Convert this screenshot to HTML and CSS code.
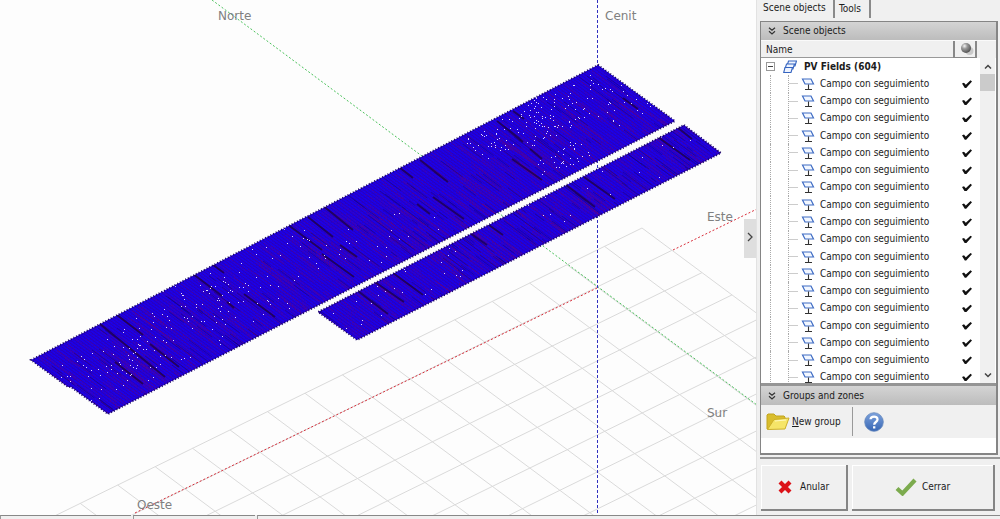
FILE: index.html
```html
<!DOCTYPE html>
<html lang="es">
<head>
<meta charset="utf-8">
<title>Scene objects</title>
<link rel="stylesheet" href="styles.css">
</head>
<body>
<svg class="defs" aria-hidden="true">
  <symbol id="panel-icon" viewBox="0 0 14 14">
    <path d="M1.5 2h8.5l2.5 5H4z" fill="#f2f7ff" stroke="#3f6cc4" stroke-width="1.2"/>
    <path d="M7.5 7.5V12M4 12.5h7" fill="none" stroke="#333" stroke-width="1.1"/>
  </symbol>
  <symbol id="chevrons" viewBox="0 0 8 8">
    <path d="M1 .7l3 2.6L7 .7M1 4.3l3 2.6 3-2.6" fill="none" stroke="#333" stroke-width="1.2"/>
  </symbol>
</svg>
<div class="app">
  <main class="scene">
    <svg class="view" viewBox="0 0 756 515" preserveAspectRatio="xMidYMid slice" role="img" aria-label="PV field">
      <defs>
        <pattern id="cells" width="4" height="3" patternUnits="userSpaceOnUse" patternTransform="matrix(0.8 0.58 -0.87 0.45 0 0)">
          <rect width="4" height="3" fill="#1b00ea"/>
          <rect width="4" height="1" fill="#2c00b4"/>
          <rect width="1" height="2" fill="#2600c4"/>
        </pattern>
        <clipPath id="fields"><path d="M598 65L675 121 108 414 71 387 68 387 31 360zM684 125L721 153 357 340 318 312z"/></clipPath>
      </defs>
      <path id="grid" class="grid"/>
      <path class="axis north" d="M212 0L757 405"/>
      <path class="axis east" d="M135 513L597 288M673 250L757 209"/>
      <path class="axis zenith" d="M597.500 0V515"/>
      <path class="field" d="M598 65L675 121 108 414 71 387 68 387 31 360zM684 125L721 153 357 340 318 312z"/>
      <g clip-path="url(#fields)">
        <path id="rows-red" class="rows red"/>
        <path id="rows-dark" class="rows dark"/>
        <path class="trench" d="M420 160l28 22M400 168l13 10M433 197l31 22M417 204l13 10M497 121l26 21M513 111l11 8M530 149l12 10M512 159l30 21M623 98l15 11M677 127l15 12M658 137l32 23M584 177l31 22M566 185l29 22M489 225l14 10M470 233l17 12M393 273l30 22M375 282l29 20M358 291l30 23M322 205l31 25M287 224l35 26M322 254l32 23M308 217l25 20M340 245l17 12M193 274l29 22M227 302l7 6M244 294l31 23M117 315l26 20M100 324l65 53M150 344l29 23M115 362l28 22M212 264l12 9"/>
        <path id="gaps" class="gaps"/>
      </g>
      <path class="rim" d="M598 65L675 121 108 414 71 387 68 387 31 360zM684 125L721 153 357 340 318 312z"/>
      <g class="labels">
        <text x="218" y="20">Norte</text>
        <text x="605" y="20">Cenit</text>
        <text x="707" y="221">Este</text>
        <text x="707" y="417">Sur</text>
        <text x="137" y="509">Oeste</text>
      </g>
    </svg>
    <button class="collapse" aria-label="Collapse panel"><svg viewBox="0 0 6 10"><path d="M1 1l4 4-4 4" fill="none" stroke="#444" stroke-width="1.3"/></svg></button>
  </main>

  <aside class="side">
    <nav class="tabs">
      <button class="tab active">Scene objects</button>
      <button class="tab">Tools</button>
    </nav>
    <div class="box">
      <h2 class="bar"><svg><use href="#chevrons"/></svg>Scene objects</h2>
      <div class="columns">
        <span class="name">Name</span>
        <span class="ball"><svg viewBox="0 0 14 14"><defs><radialGradient id="ball" cx=".35" cy=".3" r=".7"><stop offset="0" stop-color="#f4f4f4"/><stop offset=".4" stop-color="#999"/><stop offset="1" stop-color="#555"/></radialGradient></defs><circle cx="9.500" cy="9" r="4" fill="#c9c9c9"/><circle cx="6" cy="6" r="5" fill="url(#ball)"/></svg></span>
      </div>
      <div class="tree">
        <div class="items">
          <ul class="list" id="list">
            <li class="root">
              <button class="fold" aria-label="Collapse"></button>
              <svg class="stack" viewBox="0 0 14 14"><g fill="#eef4ff" stroke="#3564c0" stroke-width="1.1"><path d="M5.500 1h8l-1.500 5h-8z"/><path d="M3.500 4h8L10 9H2z"/><path d="M2 7.500h7.500L8 12.500H.7z"/></g></svg>
              PV Fields (604)
            </li>
          </ul>
        </div>
        <div class="scroll">
          <button class="arrow" aria-label="Up"><svg viewBox="0 0 8 5"><path d="M1 4.500l3-3 3 3" /></svg></button>
          <div class="track"><div class="thumb"></div></div>
          <button class="arrow" aria-label="Down"><svg viewBox="0 0 8 5"><path d="M1 .5l3 3 3-3" /></svg></button>
        </div>
      </div>
      <h2 class="bar groups"><svg><use href="#chevrons"/></svg>Groups and zones</h2>
      <div class="tools">
        <button class="tool"><svg class="folder" viewBox="0 0 24 18"><path d="M1 16V2l1-1h6l2 2h8l1 1v4L5 16z" fill="#d9bd2c" stroke="#c2a51e"/><path d="M1.500 16.500L8 6.500 23 5l-4 11z" fill="#f6e568" stroke="#cdb02a"/><path d="M9 8l11-1" stroke="#fff9bd"/></svg><span><u>N</u>ew group</span></button>
        <button class="tool help" aria-label="Help"><svg viewBox="0 0 20 20"><defs><linearGradient id="help" x2="0" y2="1"><stop offset="0" stop-color="#7da2dc"/><stop offset="1" stop-color="#3766b4"/></linearGradient></defs><circle cx="10" cy="10" r="9.300" fill="url(#help)" stroke="#6689bd" stroke-width=".8"/><path d="M6.500 7.300C6.700 3.800 13.500 3.600 13.500 7.400c0 2.500-3.300 2.700-3.300 5.300M10.200 14.200v2.200" fill="none" stroke="#fff" stroke-width="2.300"/></svg></button>
      </div>
    </div>
    <div class="actions">
      <button class="action"><svg class="cross" viewBox="0 0 14 14"><path d="M2 2l10 10M12 2L2 12" stroke="#dc1218" stroke-width="4.200"/></svg>Anular</button>
      <button class="action"><svg class="tick" viewBox="0 0 22 18"><path d="M2 10.500l5.500 5L20 2" fill="none" stroke="#7cab4e" stroke-width="4.200"/></svg>Cerrar</button>
    </div>
  </aside>
  <footer class="status"><span></span><span></span><span></span></footer>
</div>
<script src="scene.js"></script>
</body>
</html>
```

FILE: styles.css
```css
* { box-sizing: border-box; }
body { margin: 0; font: 10px/14px "DejaVu Sans Condensed", "DejaVu Sans", sans-serif; color: #1c1c1c; background: #f0f0f0; }
button { font: inherit; color: inherit; border: 0; padding: 0; background: none; }
ul, h2 { margin: 0; padding: 0; list-style: none; font: inherit; }
.defs { position: absolute; width: 0; height: 0; }
.app { display: grid; grid-template: minmax(0, 1fr) 4px / minmax(0, 1fr) 244px; height: 100vh; overflow: hidden; }

.scene { position: relative; background: #fdfdfd; overflow: hidden; }
.view { display: block; width: 100%; height: 100%; }
.grid { fill: none; stroke: #dadada; }
.axis { fill: none; stroke-dasharray: 2 2; }
.north { stroke: #4cc25c; }
.east { stroke: #d82c38; }
.zenith { stroke: #3030c0; stroke-dasharray: 3 2; }
.field { fill: url(#cells); }
.rim { fill: none; stroke: #16005c; stroke-width: 2; stroke-dasharray: 1 2; }
.rows { fill: none; }
.red { stroke: #780070; stroke-opacity: .6; stroke-dasharray: 1 1; }
.dark { stroke: #16006c; stroke-opacity: .45; }
.trench { fill: none; stroke: #20003c; stroke-width: 2; stroke-opacity: .75; }
.gaps { fill: #dcd4ff; }
.labels { font: 12px "DejaVu Sans", sans-serif; fill: #808080; }
.collapse { position: absolute; right: 0; top: 219px; width: 12px; height: 39px; background: #dedede; }
.collapse svg { width: 6px; height: 10px; }

.side { display: flex; flex-direction: column; min-height: 0; border-left: 1px solid #e2e2e2; padding-left: 3px; }
.tabs { display: flex; align-items: flex-start; height: 21px; }
.tab { height: 18px; padding: 0 8px 0 4px; border-right: 2px solid #8a8a8a; }
.tab.active { width: 75px; padding: 0 0 2px 3px; text-align: left; white-space: nowrap; }
.box { flex: 1; min-height: 0; display: flex; flex-direction: column; margin-right: 2px; border: 2px solid #858585; border-width: 1px 2px 2px 1px; background: #fff; }
.bar { display: flex; align-items: center; gap: 7px; height: 18px; padding-left: 7px; background: linear-gradient(#d4d4d4, #bcbcbc); }
.bar svg { width: 8px; height: 8px; }
.columns { display: flex; height: 18px; padding-right: 19px; background: #f0f0f0; border-top: 1px solid #fafafa; }
.name { flex: 1; padding: 2px 5px; border-bottom: 1px solid #999; }
.ball { width: 24px; padding: 1px 5px; border: solid #888; border-width: 0 2px 1px; }
.ball svg { display: block; width: 14px; height: 14px; }
.tree { flex: 1; min-height: 0; display: flex; }
.items { flex: 1; overflow: hidden; }
.list { display: grid; grid-auto-rows: 1fr; height: calc(100% + 3px); }
.list li { display: flex; align-items: center; min-height: 0; white-space: nowrap; }
.root { padding-left: 5px; font-weight: bold; }
.fold { width: 9px; height: 9px; margin-right: 8px; padding: 3px 1px; border: 1px solid #999; background: #444 content-box; }
.stack { width: 14px; height: 14px; margin-right: 7px; }
.leaf { margin-left: 9px; border-left: 1px dotted #aaa; }
.leaf::before { content: ""; align-self: stretch; width: 9px; margin-left: 17px; border-left: 1px dotted #aaa; background: linear-gradient(#ccc, #ccc) center / 100% 1px no-repeat; }
.leaf svg { width: 14px; height: 14px; margin: 0 5px 0 3px; }
.leaf label { flex: 1; }
.leaf input { appearance: none; width: 10px; height: 8px; margin: 0 8px 0 0; background: #111; clip-path: polygon(0 45%, 20% 35%, 38% 60%, 85% 5%, 100% 20%, 42% 100%, 28% 100%); }
.scroll { display: flex; flex-direction: column; width: 15px; background: #f0f0f0; margin-right: 1px; }
.arrow { height: 16px; }
.arrow svg { width: 8px; height: 5px; fill: none; stroke: #444; stroke-width: 1.5; }
.track { flex: 1; }
.thumb { height: 17px; background: #cbcbcb; }
.groups { height: 22px; border-top: 3px solid #959595; }
.tools { display: flex; height: 33px; margin-bottom: 15px; padding: 2px 5px; background: #f0f0f0; }
.tool { display: flex; align-items: center; gap: 2px; white-space: nowrap; }
.folder { width: 24px; height: 18px; }
.help { margin-left: 11px; padding-left: 11px; border-left: 1px solid #999; }
.help svg { width: 20px; height: 20px; }
.actions { display: flex; gap: 4px; margin-top: 2px; padding: 6px 5px 4px 1px; border-top: 2px solid #999; }
.action { display: flex; align-items: center; justify-content: center; gap: 8px; height: 46px; flex: 86; border: solid #858585; border-width: 0 2px 2px 0; box-shadow: inset 1px 1px #fff; }
.action + .action { flex: 142; gap: 5px; }
.cross { width: 14px; height: 14px; }
.tick { width: 22px; height: 18px; }
.status { grid-column: 1 / -1; display: flex; gap: 2px; }
.status span { width: 131px; border-top: 1px solid #888; border-left: 1px solid #999; }
.status span:nth-child(2) { width: 122px; }
.status span:last-child { flex: 1; }
```

FILE: scene.js
```js
// Ground grid: two families of parallel lines leaving the far corner.
const U = [-37.45, 18.36], V = [30, 22.3], FAR = [642, 228];
let grid = "";
for (let i = 0; i < 24; i++) {
  grid += `M${FAR[0] + i * U[0]} ${FAR[1] + i * U[1]}l${V[0] * 20} ${V[1] * 20}`;
  grid += `M${FAR[0] + i * V[0]} ${FAR[1] + i * V[1]}l${U[0] * 22} ${U[1] * 22}`;
}
document.getElementById("grid").setAttribute("d", grid);

// Seeded generator keeps the field texture the same on each load.
let seed = 604;
const rnd = () => (seed = (seed * 16807) % 2147483647) / 2147483647;

const row = (long) => {
  const s = rnd() * 1.05, t = rnd() * 2.1, n = 5 + rnd() * long;
  const x = Math.round(31 + 567 * s + 77 * t), y = Math.round(360 - 295 * s + 56 * t);
  return `M${x} ${y}l${n} ${n * 0.74}`;
};
let red = "", dark = "";
for (let i = 0; i < 1500; i++) red += row(34);
for (let i = 0; i < 360; i++) dark += row(22);
document.getElementById("rows-red").setAttribute("d", red);
document.getElementById("rows-dark").setAttribute("d", dark);

// Bright specks, grouped: centre x, centre y, spread along, spread across, count.
const groups = [
  [515, 134, 38, 18, 75], [560, 158, 24, 10, 34], [585, 98, 42, 22, 45],
  [625, 100, 32, 20, 26], [555, 110, 24, 14, 24], [180, 330, 85, 28, 105],
  [110, 365, 55, 22, 45], [250, 275, 70, 26, 48], [375, 240, 55, 20, 20],
  [610, 180, 80, 18, 18], [400, 290, 65, 15, 24]
];
let gaps = "";
for (const [cx, cy, a, b, n] of groups) {
  for (let i = 0; i < n; i++) {
    const s = (rnd() * 2 - 1) * a, t = (rnd() * 2 - 1) * b;
    gaps += `M${Math.round(cx + s + t)} ${Math.round(cy - s * 0.52 + t * 0.74)}h1v1h-1z`;
  }
}
document.getElementById("gaps").setAttribute("d", gaps);

const list = document.getElementById("list");
for (let i = 1; i <= 18; i++) {
  const li = document.createElement("li");
  li.className = "leaf";
  li.innerHTML = `<svg><use href="#panel-icon"/></svg><label for="f${i}">Campo con seguimiento</label><input type="checkbox" id="f${i}" checked>`;
  list.append(li);
}
```
